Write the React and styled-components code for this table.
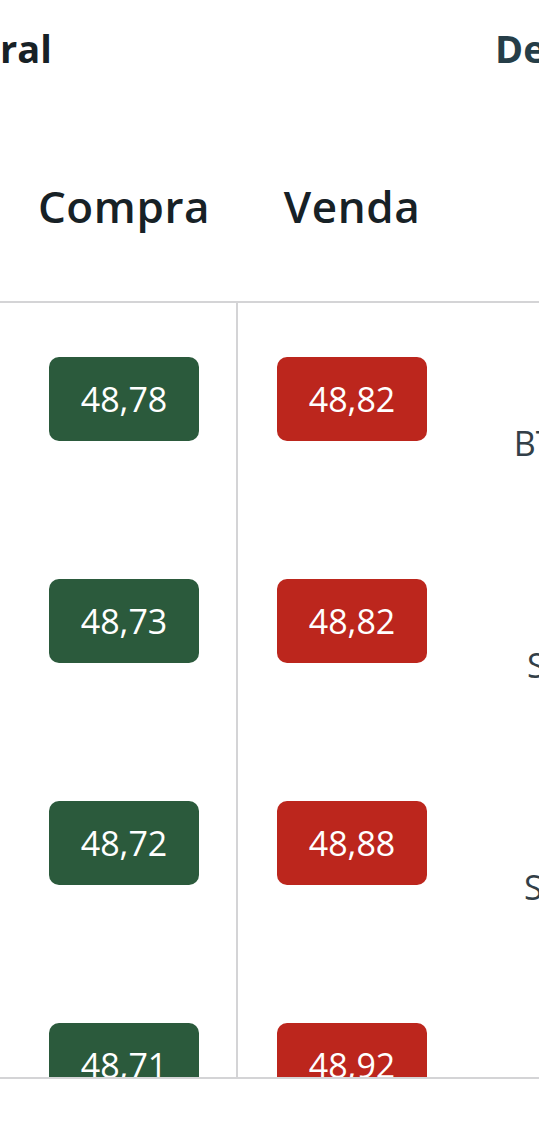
import React from 'react';
import styled, { createGlobalStyle } from 'styled-components';

const GlobalStyle = createGlobalStyle`
  html, body {
    margin: 0;
    padding: 0;
    background: #ffffff;
  }
  body {
    font-family: "Open Sans", "Liberation Sans", sans-serif;
  }
`;

const quotes = [
    { buy: '48,78', sell: '48,82', name: 'BTG Pactual' },
    { buy: '48,73', sell: '48,82', name: 'Santander' },
    { buy: '48,72', sell: '48,88', name: 'Safra Bank' },
    { buy: '48,71', sell: '48,92', name: 'Sicoob' },
];

const App = () => {
    return (
        <Page>
            <GlobalStyle />
            <TabBar>
                <Tab $active>Geral</Tab>
                <Tab>Detalhes</Tab>
            </TabBar>

            <HeaderRow>
                <HeadCell>Compra</HeadCell>
                <HeadCell>Venda</HeadCell>
                <HeadCell />
            </HeaderRow>

            <Body>
                {quotes.map((q) => (
                    <Row key={q.name + q.buy}>
                        <PriceCell>
                            <Price $kind="buy">{q.buy}</Price>
                        </PriceCell>
                        <PriceCell $divider>
                            <Price $kind="sell">{q.sell}</Price>
                        </PriceCell>
                        <NameCell>{q.name}</NameCell>
                    </Row>
                ))}
            </Body>
        </Page>
    );
};

const Page = styled.div`
    width: 539px;
    height: 1136px;
    overflow: hidden;
    background: #ffffff;
`;

// a aba "Geral" está parcialmente rolada para fora da tela
const TabBar = styled.div`
    display: flex;
    align-items: baseline;
    gap: 61px;
    margin-left: -50px;
    padding-top: 22px;
    white-space: nowrap;
`;

const Tab = styled.div`
    font-size: 38px;
    font-weight: 700;
    color: ${(p) => (p.$active ? '#172126' : '#263e48')};
    width: ${(p) => (p.$active ? '104px' : 'auto')};
    flex-shrink: 0;
    padding-right: 380px;
    &:last-child {
        padding-right: 0;
    }
`;

const Columns = styled.div`
    display: grid;
    grid-template-columns: 236px 230px 286px;
`;

const HeaderRow = styled(Columns)`
    margin-top: 102px;
    padding-bottom: 65px;
`;

const HeadCell = styled.div`
    font-size: 44px;
    font-weight: 600;
    color: #172126;
    text-align: center;
    letter-spacing: 0.6px;
    &:first-child {
        padding-left: 12px;
    }
    &:nth-child(2) {
        padding-left: 2px;
    }
`;

const Body = styled.div`
    height: 774px;
    overflow: hidden;
    border-top: 2px solid #d4d4d6;
    border-bottom: 2px solid #d4d4d6;
`;

const Row = styled(Columns)`
    height: 222px;
`;

const PriceCell = styled.div`
    display: flex;
    justify-content: center;
    align-items: flex-start;
    padding-top: 54px;
    padding-left: ${(p) => (p.$divider ? '0' : '12px')};
    border-left: ${(p) => (p.$divider ? '2px solid #d4d4d6' : 'none')};
`;

const Price = styled.div`
    width: 150px;
    height: 84px;
    border-radius: 10px;
    display: flex;
    align-items: center;
    justify-content: center;
    font-size: 34px;
    color: #ffffff;
    background: ${(p) => (p.$kind === 'buy' ? '#2b5a3c' : '#bc261d')};
`;

const NameCell = styled.div`
    padding-top: 117px;
    font-size: 34px;
    color: #333f48;
    text-align: center;
    white-space: nowrap;
`;

export default App;
